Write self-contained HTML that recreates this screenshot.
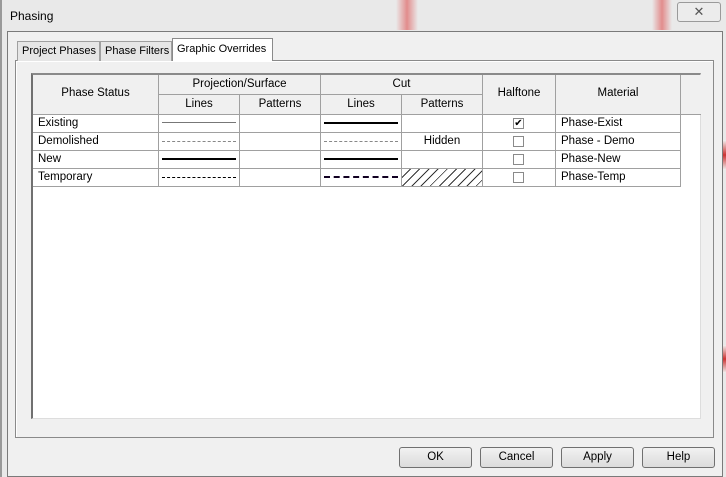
<!DOCTYPE html>
<html><head><style>
*{box-sizing:border-box;margin:0;padding:0}
body{width:726px;height:477px;background:#e9e9e9;font-family:"Liberation Sans",sans-serif;font-size:11.5px;color:#000;position:relative;overflow:hidden}
.abs{position:absolute}
.red{background:linear-gradient(90deg,rgba(230,140,140,0),rgba(225,130,130,.9),rgba(230,140,140,0))}
.client{left:7px;top:31px;width:716px;height:446px;background:#f0f0f0;border:1px solid #7a7a7a}
.tab{top:41px;height:20px;background:#e6e6e6;border:1px solid #a0a0a0;border-bottom:none;font-size:11px;padding:3px 0 0 4px;white-space:nowrap}
.panel{left:15px;top:60px;width:699px;height:378px;border:1px solid #8a8a8a;background:#f0f0f0;box-shadow:inset 1px 1px 0 #fff}
.grid{left:31px;top:73px;width:670px;height:346px;background:#fff;border-left:2px solid #707070;border-top:2px solid #8a8a8a;border-right:1px solid #ddd;border-bottom:1px solid #ddd}
.c{position:absolute;border-right:1px solid #a0a0a0;border-bottom:1px solid #a0a0a0;font-size:11.5px;white-space:nowrap}
.h{background:#f0f0f0;text-align:center}
.btn{top:447px;width:73px;height:21px;border:1px solid #707070;border-radius:3px;background:linear-gradient(#f2f2f2,#e6e6e6 50%,#dcdcdc);text-align:center;font-size:11.5px;padding-top:3px}
.ln{position:absolute;left:3px;right:3px}
.cb{position:absolute;left:30px;top:3px;width:11px;height:11px;border:1px solid #8a8a8a;background:#fff;font-size:10px;line-height:9px;text-align:center}
</style></head><body>
<div class="abs red" style="left:396px;top:0;width:22px;height:30px"></div>
<div class="abs red" style="left:652px;top:0;width:20px;height:30px"></div>
<div class="abs" style="left:0;top:0;width:2px;height:477px;background:#999"></div>
<div class="abs" style="left:10px;top:9px;font-size:12px">Phasing</div>
<div class="abs" style="left:677px;top:2px;width:44px;height:20px;border:1px solid #9a9a9a;border-radius:3px;background:#ececec;text-align:center;font-size:13px;color:#555;line-height:17px">✕</div>
<div class="abs client"></div>
<div class="abs" style="left:723px;top:140px;width:3px;height:30px;background:linear-gradient(#f0f0f0,#c33 50%,#f0f0f0)"></div>
<div class="abs" style="left:723px;top:345px;width:3px;height:28px;background:linear-gradient(#f0f0f0,#c33 50%,#f0f0f0)"></div>
<div class="abs panel"></div>
<div class="abs tab" style="left:17px;width:83px">Project Phases</div>
<div class="abs tab" style="left:100px;width:72px">Phase Filters</div>
<div class="abs tab" style="left:172px;top:38px;width:101px;height:23px;background:#fff;padding-top:4px;border-color:#8a8a8a">Graphic Overrides</div>
<div class="abs grid">
<div class="c h" style="left:0;top:0;width:126px;height:40px;padding-top:12px">Phase Status</div>
<div class="c h" style="left:126px;top:0;width:162px;height:20px;padding-top:3px">Projection/Surface</div>
<div class="c h" style="left:126px;top:20px;width:81px;height:20px;padding-top:3px">Lines</div>
<div class="c h" style="left:207px;top:20px;width:81px;height:20px;padding-top:3px">Patterns</div>
<div class="c h" style="left:288px;top:0;width:162px;height:20px;padding-top:3px">Cut</div>
<div class="c h" style="left:288px;top:20px;width:81px;height:20px;padding-top:3px">Lines</div>
<div class="c h" style="left:369px;top:20px;width:81px;height:20px;padding-top:3px">Patterns</div>
<div class="c h" style="left:450px;top:0;width:73px;height:40px;padding-top:12px">Halftone</div>
<div class="c h" style="left:523px;top:0;width:125px;height:40px;padding-top:12px">Material</div>
<div class="c h" style="left:648px;top:0;width:20px;height:40px;border-right:none"></div>

<div class="c" style="left:0;top:40px;width:126px;height:18px;padding:2px 0 0 5px">Existing</div>
<div class="c" style="left:126px;top:40px;width:81px;height:18px"><div class="ln" style="top:7px;border-top:1px solid #777"></div></div>
<div class="c" style="left:207px;top:40px;width:81px;height:18px"></div>
<div class="c" style="left:288px;top:40px;width:81px;height:18px"><div class="ln" style="top:7px;border-top:2px solid #000"></div></div>
<div class="c" style="left:369px;top:40px;width:81px;height:18px"></div>
<div class="c" style="left:450px;top:40px;width:73px;height:18px"><div class="cb">✔</div></div>
<div class="c" style="left:523px;top:40px;width:125px;height:18px;padding:2px 0 0 5px">Phase-Exist</div>

<div class="c" style="left:0;top:58px;width:126px;height:18px;padding:2px 0 0 5px">Demolished</div>
<div class="c" style="left:126px;top:58px;width:81px;height:18px"><div class="ln" style="top:8px;border-top:1px dashed #888"></div></div>
<div class="c" style="left:207px;top:58px;width:81px;height:18px"></div>
<div class="c" style="left:288px;top:58px;width:81px;height:18px"><div class="ln" style="top:8px;border-top:1px dashed #888"></div></div>
<div class="c" style="left:369px;top:58px;width:81px;height:18px;text-align:center;padding-top:2px">Hidden</div>
<div class="c" style="left:450px;top:58px;width:73px;height:18px"><div class="cb"></div></div>
<div class="c" style="left:523px;top:58px;width:125px;height:18px;padding:2px 0 0 5px">Phase - Demo</div>

<div class="c" style="left:0;top:76px;width:126px;height:18px;padding:2px 0 0 5px">New</div>
<div class="c" style="left:126px;top:76px;width:81px;height:18px"><div class="ln" style="top:7px;border-top:2px solid #000"></div></div>
<div class="c" style="left:207px;top:76px;width:81px;height:18px"></div>
<div class="c" style="left:288px;top:76px;width:81px;height:18px"><div class="ln" style="top:7px;border-top:2px solid #000"></div></div>
<div class="c" style="left:369px;top:76px;width:81px;height:18px"></div>
<div class="c" style="left:450px;top:76px;width:73px;height:18px"><div class="cb"></div></div>
<div class="c" style="left:523px;top:76px;width:125px;height:18px;padding:2px 0 0 5px">Phase-New</div>

<div class="c" style="left:0;top:94px;width:126px;height:18px;padding:2px 0 0 5px">Temporary</div>
<div class="c" style="left:126px;top:94px;width:81px;height:18px"><div class="ln" style="top:8px;border-top:1px dashed #000"></div></div>
<div class="c" style="left:207px;top:94px;width:81px;height:18px"></div>
<div class="c" style="left:288px;top:94px;width:81px;height:18px"><div class="ln" style="top:7px;border-top:2px dashed #102"></div></div>
<div class="c" style="left:369px;top:94px;width:81px;height:18px;background:repeating-linear-gradient(135deg,#fff 0 5.5px,#333 5.5px 6.5px)"></div>
<div class="c" style="left:450px;top:94px;width:73px;height:18px"><div class="cb"></div></div>
<div class="c" style="left:523px;top:94px;width:125px;height:18px;padding:2px 0 0 5px">Phase-Temp</div>
</div>
<div class="abs btn" style="left:399px">OK</div>
<div class="abs btn" style="left:480px">Cancel</div>
<div class="abs btn" style="left:561px">Apply</div>
<div class="abs btn" style="left:642px">Help</div>
</body></html>
